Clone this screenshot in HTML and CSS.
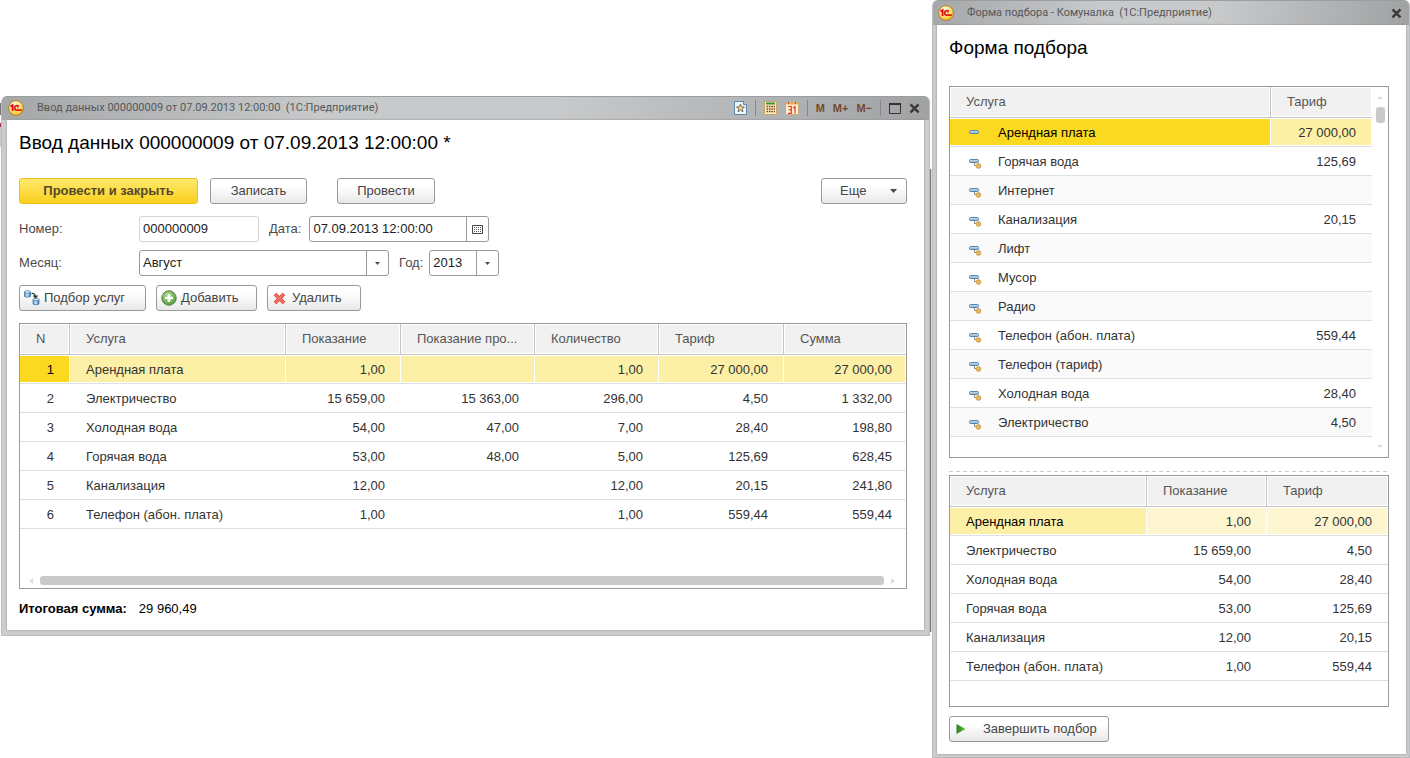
FILE: index.html
```
<!DOCTYPE html>
<html lang="ru">
<head>
<meta charset="utf-8">
<title>Ввод данных</title>
<link rel="stylesheet" href="styles.css">
</head>
<body>
<svg class="defs" aria-hidden="true">
  <defs>
    <radialGradient id="gold" cx="0.4" cy="0.25" r="0.8"><stop offset="0" stop-color="#fffbe0"/><stop offset="0.5" stop-color="#fde878"/><stop offset="1" stop-color="#f5b81c"/></radialGradient>
    <linearGradient id="bar" x1="0" y1="0" x2="0" y2="1"><stop offset="0" stop-color="#d5e9f6"/><stop offset="1" stop-color="#7fa9c8"/></linearGradient>
    <radialGradient id="green" cx="0.4" cy="0.3" r="0.8"><stop offset="0" stop-color="#a9dc8c"/><stop offset="1" stop-color="#4a9a35"/></radialGradient>
    <linearGradient id="play" x1="0" y1="0" x2="1" y2="0"><stop offset="0" stop-color="#2f7d25"/><stop offset="1" stop-color="#5cc62f"/></linearGradient>
    <linearGradient id="tank" x1="0" y1="0" x2="1" y2="0"><stop offset="0" stop-color="#3f7dab"/><stop offset="0.4" stop-color="#d3ecfa"/><stop offset="1" stop-color="#3a75a3"/></linearGradient>
  </defs>
  <symbol id="logo" viewBox="0 0 16 16">
    <circle cx="8" cy="8" r="7.4" fill="url(#gold)" stroke="#b9772b" stroke-width="1"/>
    <path d="M2.4 6.4L4.6 5.2V11" fill="none" stroke="#e0141c" stroke-width="1.9"/>
    <path d="M10.8 6.6A2.3 2.3 0 1 0 9 10.2H13.8" fill="none" stroke="#e0141c" stroke-width="1.8"/>
    <path d="M9 7.9H10.4" stroke="#e0141c"/>
  </symbol>
  <symbol id="item" viewBox="0 0 14 12">
    <rect x="0.5" y="1.5" width="9" height="3" rx="1" fill="url(#bar)" stroke="#5685aa"/>
  </symbol>
  <symbol id="item-dot" viewBox="0 0 14 12">
    <rect x="0.5" y="1.5" width="9" height="3" rx="1" fill="url(#bar)" stroke="#5685aa"/>
    <path d="M5.5 5V7.5H7" fill="none" stroke="#888"/>
    <circle cx="9.5" cy="8" r="2.4" fill="#e5b95a" stroke="#b98a38" stroke-width="0.6"/>
  </symbol>
  <symbol id="close" viewBox="0 0 11 11">
    <path d="M1.8 2.3L9.2 9.7M9.2 2.3L1.8 9.7" stroke="#fff" stroke-opacity="0.5" stroke-width="3"/>
    <path d="M1.5 1.5L9.5 9.5M9.5 1.5L1.5 9.5" stroke="#3c3c3c" stroke-width="2.6"/>
  </symbol>
  <symbol id="caret" viewBox="0 0 7 4"><path d="M0 0H7L3.5 4Z" fill="#4a4a4a"/></symbol>
</svg>
<div class="desktop">
  <div class="behind behind-left"></div>
  <main class="window main-window">
    <header class="titlebar">
      <svg class="logo"><use href="#logo"/></svg>
      <span class="caption">Ввод данных 000000009 от 07.09.2013 12:00:00&nbsp; (1С:Предприятие)</span>
      <div class="tools">
        <button class="tool" aria-label="Избранное"><svg width="13" height="14" viewBox="0 0 13 14"><path d="M.5 .5H9.5L12.5 3.5V13.5H.5Z" fill="#eef6fc" stroke="#5d87a8"/><path d="M9.5 .5V3.5H12.5" fill="#c8deee" stroke="#5d87a8"/><path d="M6.5 3L7.6 5.8L10.5 6L8.2 7.9L9 10.8L6.5 9.2L4 10.8L4.8 7.9L2.5 6L5.4 5.8Z" fill="#f6d28c" stroke="#555" stroke-width=".8"/></svg></button>
        <span class="divider"></span>
        <button class="tool" aria-label="Калькулятор"><svg width="13" height="14" viewBox="0 0 13 14"><path d="M.5 .5H12.5V13.5H.5Z" fill="#fdebc0" stroke="#c9a265"/><path d="M2 1.5H11V3.5H2Z" fill="#3d9438"/><path d="M2.5 5.5H11M2.5 8H11M2.5 10.5H11" stroke="#7a4e22" stroke-width="1.4" stroke-dasharray="1.6 .8"/></svg></button>
        <button class="tool" aria-label="Календарь"><svg width="14" height="14" viewBox="0 0 14 14"><path d="M.5 1.5H13.5V13.5H.5Z" fill="#fff0c9" stroke="#c7a98a"/><path d="M1 1.5H13V3.5H1Z" fill="#f3ad58"/><path d="M3.5 1V3M10.5 1V3" stroke="#9a5b2b"/><path d="M3 5.5H6.3V12.3H3M3.8 8.8H6.3M8 7L10 5.7V12.5" fill="none" stroke="#e8392b" stroke-width="1.2"/></svg></button>
        <span class="divider"></span>
        <button class="tool memory">M</button>
        <button class="tool memory">M+</button>
        <button class="tool memory">M−</button>
        <span class="divider"></span>
        <button class="tool" aria-label="Развернуть"><svg width="12" height="11" viewBox="0 0 12 11"><path d="M.5 .5H11.5V10.5H.5Z" fill="none" stroke="#333"/><path d="M0 1H12" stroke="#333" stroke-width="2"/></svg></button>
        <button class="tool" aria-label="Закрыть"><svg width="11" height="11"><use href="#close"/></svg></button>
      </div>
    </header>
    <div class="content">
      <h1>Ввод данных 000000009 от 07.09.2013 12:00:00 *</h1>
      <div class="commands">
        <button class="btn primary">Провести и закрыть</button>
        <button class="btn save">Записать</button>
        <button class="btn post">Провести</button>
        <button class="btn more">Еще<svg width="7" height="4"><use href="#caret"/></svg></button>
      </div>
      <div class="fields">
        <label class="first" for="num">Номер:</label>
        <input class="box number" id="num" value="000000009" readonly>
        <label for="date">Дата:</label>
        <div class="box combo date">
          <input id="date" value="07.09.2013 12:00:00">
          <button aria-label="Выбрать дату"><svg width="11" height="9" viewBox="0 0 11 9"><path d="M.5 .5H10.5V8.5H.5Z" fill="#fff" stroke="#444"/><path d="M2 2.5H9M2 4.5H9M2 6.5H9" stroke="#555" stroke-dasharray="1 1"/></svg></button>
        </div>
      </div>
      <div class="fields">
        <label class="first" for="month">Месяц:</label>
        <div class="box pick month"><select id="month"><option>Август</option></select><span class="arrow"><svg width="5" height="3"><use href="#caret"/></svg></span></div>
        <label for="year">Год:</label>
        <div class="box pick year"><select id="year"><option>2013</option></select><span class="arrow"><svg width="5" height="3"><use href="#caret"/></svg></span></div>
      </div>
      <div class="commands table-commands">
        <button class="btn icon choose"><svg width="16" height="16" viewBox="0 0 16 16"><path d="M.5 2V6.5Q3.5 8 6.5 6.5V2Z" fill="url(#tank)" stroke="#3a72a0" stroke-width=".7"/><ellipse cx="3.5" cy="2" rx="3" ry="1.3" fill="#d8eefa" stroke="#3a72a0" stroke-width=".7"/><path d="M9 9.5V14Q12 15.8 15 14V9.5Z" fill="url(#tank)" stroke="#3a72a0" stroke-width=".7"/><ellipse cx="12" cy="9.5" rx="3" ry="1.3" fill="#d8eefa" stroke="#3a72a0" stroke-width=".7"/><path d="M7.5 3.5Q11.5 3 11.5 7M9.5 5.5L11.5 7.8L13.5 5.5" fill="none" stroke="#2c3e2a" stroke-width="1.3"/></svg>Подбор услуг</button>
        <button class="btn icon add"><svg width="16" height="16" viewBox="0 0 16 16"><circle cx="8" cy="8" r="7.2" fill="url(#green)" stroke="#557d4a"/><path d="M8 4V12M4 8H12" stroke="#fff" stroke-width="2.6"/></svg>Добавить</button>
        <button class="btn icon remove"><svg width="13" height="13" viewBox="0 0 13 13"><path d="M2 2L11 11M11 2L2 11" stroke="#cf3f38" stroke-width="3.6"/><path d="M2.3 2.3L10.7 10.7M10.7 2.3L2.3 10.7" stroke="#f27464" stroke-width="2.2"/></svg>Удалить</button>
      </div>
      <div class="grid-frame main-grid">
        <table>
          <colgroup><col class="w50"><col class="w216"><col class="w115"><col class="w134"><col class="w124"><col class="w125"><col></colgroup>
          <thead><tr><th>N</th><th>Услуга</th><th>Показание</th><th>Показание про...</th><th>Количество</th><th>Тариф</th><th>Сумма</th></tr></thead>
          <tbody>
            <tr class="selected"><td class="num current">1</td><td>Арендная плата</td><td class="num">1,00</td><td class="num"></td><td class="num">1,00</td><td class="num">27 000,00</td><td class="num">27 000,00</td></tr>
            <tr><td class="num">2</td><td>Электричество</td><td class="num">15 659,00</td><td class="num">15 363,00</td><td class="num">296,00</td><td class="num">4,50</td><td class="num">1 332,00</td></tr>
            <tr><td class="num">3</td><td>Холодная вода</td><td class="num">54,00</td><td class="num">47,00</td><td class="num">7,00</td><td class="num">28,40</td><td class="num">198,80</td></tr>
            <tr><td class="num">4</td><td>Горячая вода</td><td class="num">53,00</td><td class="num">48,00</td><td class="num">5,00</td><td class="num">125,69</td><td class="num">628,45</td></tr>
            <tr><td class="num">5</td><td>Канализация</td><td class="num">12,00</td><td class="num"></td><td class="num">12,00</td><td class="num">20,15</td><td class="num">241,80</td></tr>
            <tr><td class="num">6</td><td>Телефон (абон. плата)</td><td class="num">1,00</td><td class="num"></td><td class="num">1,00</td><td class="num">559,44</td><td class="num">559,44</td></tr>
          </tbody>
        </table>
        <div class="scroll-h"><svg width="4" height="6" viewBox="0 0 4 6"><path d="M4 0V6L0 3Z" fill="#ddd"/></svg><span class="thumb"></span><svg width="4" height="6" viewBox="0 0 4 6"><path d="M0 0V6L4 3Z" fill="#ddd"/></svg></div>
      </div>
      <div class="total"><strong>Итоговая сумма:</strong><span>29 960,49</span></div>
    </div>
  </main>
  <div class="behind behind-right"></div>
  <section class="window pick-window">
    <header class="titlebar">
      <svg class="logo"><use href="#logo"/></svg>
      <span class="caption">Форма подбора - Комуналка&nbsp; (1С:Предприятие)</span>
      <div class="tools"><button class="tool" aria-label="Закрыть"><svg width="11" height="11"><use href="#close"/></svg></button></div>
    </header>
    <div class="content">
      <h1>Форма подбора</h1>
      <div class="grid-frame source-grid">
        <table class="striped">
          <colgroup><col><col class="w101"></colgroup>
          <thead><tr><th>Услуга</th><th>Тариф</th></tr></thead>
          <tbody>
            <tr class="selected"><td class="current"><svg class="mark"><use href="#item"/></svg>Арендная плата</td><td class="num">27 000,00</td></tr>
            <tr><td><svg class="mark"><use href="#item-dot"/></svg>Горячая вода</td><td class="num">125,69</td></tr>
            <tr><td><svg class="mark"><use href="#item-dot"/></svg>Интернет</td><td class="num"></td></tr>
            <tr><td><svg class="mark"><use href="#item-dot"/></svg>Канализация</td><td class="num">20,15</td></tr>
            <tr><td><svg class="mark"><use href="#item-dot"/></svg>Лифт</td><td class="num"></td></tr>
            <tr><td><svg class="mark"><use href="#item-dot"/></svg>Мусор</td><td class="num"></td></tr>
            <tr><td><svg class="mark"><use href="#item-dot"/></svg>Радио</td><td class="num"></td></tr>
            <tr><td><svg class="mark"><use href="#item-dot"/></svg>Телефон (абон. плата)</td><td class="num">559,44</td></tr>
            <tr><td><svg class="mark"><use href="#item-dot"/></svg>Телефон (тариф)</td><td class="num"></td></tr>
            <tr><td><svg class="mark"><use href="#item-dot"/></svg>Холодная вода</td><td class="num">28,40</td></tr>
            <tr><td><svg class="mark"><use href="#item-dot"/></svg>Электричество</td><td class="num">4,50</td></tr>
          </tbody>
        </table>
        <div class="scroll-v"><svg width="6" height="3" viewBox="0 0 6 3"><path d="M0 3H6L3 0Z" fill="#ddd"/></svg><span class="thumb"></span><svg class="down" width="6" height="3" viewBox="0 0 6 3"><path d="M0 0H6L3 3Z" fill="#ddd"/></svg></div>
      </div>
      <div class="splitter"></div>
      <div class="grid-frame chosen-grid">
        <table>
          <colgroup><col><col class="w120"><col class="w121"></colgroup>
          <thead><tr><th>Услуга</th><th>Показание</th><th>Тариф</th></tr></thead>
          <tbody>
            <tr class="inactive"><td class="current">Арендная плата</td><td class="num">1,00</td><td class="num">27 000,00</td></tr>
            <tr><td>Электричество</td><td class="num">15 659,00</td><td class="num">4,50</td></tr>
            <tr><td>Холодная вода</td><td class="num">54,00</td><td class="num">28,40</td></tr>
            <tr><td>Горячая вода</td><td class="num">53,00</td><td class="num">125,69</td></tr>
            <tr><td>Канализация</td><td class="num">12,00</td><td class="num">20,15</td></tr>
            <tr><td>Телефон (абон. плата)</td><td class="num">1,00</td><td class="num">559,44</td></tr>
          </tbody>
        </table>
      </div>
      <button class="btn icon finish"><svg width="10" height="10" viewBox="0 0 10 10"><path d="M.5 0V10L9.5 5Z" fill="url(#play)"/></svg>Завершить подбор</button>
    </div>
  </section>
</div>
</body>
</html>
```
FILE: styles.css
```
* { box-sizing: border-box; }
body { margin: 0; background: #fff; color: #333; font: 13px/16px "Liberation Sans", Arial, sans-serif; }
button, input, select { font: inherit; color: inherit; margin: 0; }
svg { display: block; flex: none; }
.defs { position: absolute; width: 0; height: 0; }

.desktop { display: flex; align-items: flex-start; min-height: 100vh; }
.behind { flex: none; }
.behind-left { width: 1px; height: 44px; margin-top: 103px; background: linear-gradient(#777 0 12px, #fff 12px 20px, #a34 20px 24px, #ccc 24px); }
.behind-right { width: 2px; height: 463px; margin-top: 169px; background: linear-gradient(90deg, #777 1px, #ddd 1px); }

.window { display: flex; flex-direction: column; padding: 0 5px 5px; background: #cbcdce; border: 1px solid #b9bbbc; border-top-color: #9b9d9e; }
.main-window { flex: 1; min-width: 0; margin-top: 96px; border-radius: 6px 6px 0 0; }
.pick-window { flex: 0 0 478px; min-height: 100vh; padding: 0 3px 3px 4px; border-radius: 6px 6px 0 0; }

.titlebar { display: flex; align-items: center; height: 23px; margin: 0 -5px; padding: 0 9px 1px 6px; background: linear-gradient(90deg, #a5a7a9, #c8c9ca 35%, #c8c9ca 60%, #a0a2a4); border-radius: 5px 5px 0 0; }
.pick-window .titlebar { height: 24px; margin: 0 -3px 0 -4px; padding: 0 7px 0 5px; }
.logo { width: 16px; height: 16px; }
.caption { margin-left: 13px; color: #56585a; font: 11px/16px Roboto, sans-serif; white-space: nowrap; }
.tools { display: flex; align-items: center; gap: 8px; margin-left: auto; }
.tool { display: block; padding: 0; border: 0; background: none; }
.memory { color: #75492b; font: bold 11px/16px "Liberation Sans", Arial, sans-serif; }
.divider { width: 1px; height: 16px; background: #85878a; }

.content { flex: 1; display: flex; flex-direction: column; padding: 11px 17px 12px 12px; background: #fff; box-shadow: 0 0 2px #888; }
h1 { margin: 0; color: #000; font: 19px/24px "Liberation Sans", Arial, sans-serif; white-space: nowrap; }

.btn { display: flex; align-items: center; justify-content: center; height: 26px; padding: 0 20px; color: #444; border: 1px solid #999; border-radius: 3px; background: linear-gradient(#fff 30%, #e8e8e8); white-space: nowrap; }
.primary { width: 179px; font-weight: bold; color: #55482a; border-color: #f0bd20; background: linear-gradient(#ffe96d, #fad01e); }
.commands { display: flex; margin-top: 23px; }
.save { width: 97px; margin-left: 12px; }
.post { width: 98px; margin-left: 30px; }
.more { width: 86px; margin-left: auto; padding: 0 9px 0 18px; justify-content: space-between; }
.icon { justify-content: flex-start; padding: 0 4px; gap: 4px; }
.table-commands { margin-top: 9px; gap: 10px; }
.choose { width: 127px; }
.add { width: 101px; }
.remove { width: 94px; gap: 6px; padding-left: 5px; }

.fields { display: flex; align-items: center; margin-top: 12px; color: #4a4a4a; }
.fields + .fields { margin-top: 8px; }
.fields label { margin: 0 8px 0 10px; }
.fields .first { width: 120px; margin: 0; }
.box { height: 26px; border: 1px solid #999; border-radius: 3px; background: #fff; color: #222; }
.number { width: 120px; padding: 0 3px 2px; border-color: #d4d4d4; }
.combo { display: flex; width: 180px; }
.combo input { flex: 1; min-width: 0; padding: 0 3px; border: 0; background: none; }
.combo button { display: grid; place-items: center; width: 22px; padding: 0; border: 0; border-left: 1px solid #999; background: none; }
.pick { display: grid; grid-template-columns: 1fr 22px; }
.pick select { grid-area: 1 / 1 / 2 / 3; padding: 0 3px; border: 0; background: none; appearance: none; }
.arrow { grid-area: 1 / 2; display: grid; place-items: center; border-left: 1px solid #999; pointer-events: none; }
.month { width: 250px; }
.year { width: 70px; }
.fields .pick + label { margin-right: 6px; }

.grid-frame { display: flex; flex-direction: column; border: 1px solid #999; background: #fff; }
.main-grid { height: 266px; margin-top: 12px; }
table { width: 100%; table-layout: fixed; border-collapse: separate; border-spacing: 0; }
th, td { overflow: hidden; padding: 0 16px; text-align: left; white-space: nowrap; }
th { height: 31px; color: #555; font-weight: normal; background: #f1f1f1; border-right: 1px solid #c4c4c4; border-bottom: 1px solid #c4c4c4; box-shadow: inset 0 0 0 1px #fff; }
th:last-child { border-right: 0; }
td { height: 29px; padding-top: 2px; border-bottom: 1px solid #e0e0e0; }
.num { padding-left: 0; text-align: right; }
.main-grid td:last-child { padding-right: 14px; }
.selected td { background: #fcf0a6; box-shadow: inset -1px 0 #fff, inset 0 1px #fff, inset 0 -1px #fff; }
.inactive td { background: #fdf6d1; box-shadow: inset -1px 0 #fff, inset 0 1px #fff, inset 0 -1px #fff; }
.selected .current { color: #000; background: #fbd920; }
.inactive .current { color: #000; background: #fcf0a6; }
.striped tbody tr:nth-child(odd):not(.selected) { background: #fafafa; }
.w50 { width: 50px; }
.w101 { width: 101px; }
.w115 { width: 115px; }
.w120 { width: 120px; }
.w121 { width: 121px; }
.w124 { width: 124px; }
.w125 { width: 125px; }
.w134 { width: 134px; }
.w216 { width: 216px; }
.scroll-h { display: flex; align-items: center; gap: 7px; margin-top: auto; padding: 0 11px 3px 9px; }
.scroll-h .thumb { flex: 1; height: 9px; border-radius: 3px; background: #cacaca; }
.total { display: flex; gap: 12px; margin-top: 12px; color: #000; }
.main-window .content { padding-bottom: 13px; }

.source-grid { flex-direction: row; height: 372px; margin-top: 26px; }
.source-grid table { flex: 1; min-width: 0; align-self: flex-start; }
.scroll-v { display: flex; flex-direction: column; align-items: center; flex: 0 0 16px; padding: 9px 0; }
.scroll-v .thumb { width: 9px; height: 16px; margin-top: 8px; border-radius: 3px; background: #cacaca; }
.down { margin-top: auto; }
.mark { display: inline-block; width: 14px; height: 12px; margin: 2px 15px 0 3px; vertical-align: middle; }
.splitter { height: 1px; margin: 13px 0 3px; background: repeating-linear-gradient(90deg, #ccc 0 4px, #fff 4px 7px); }
.chosen-grid { height: 232px; }
.finish { width: 160px; margin-top: 9px; padding-left: 6px; gap: 17px; }
```
